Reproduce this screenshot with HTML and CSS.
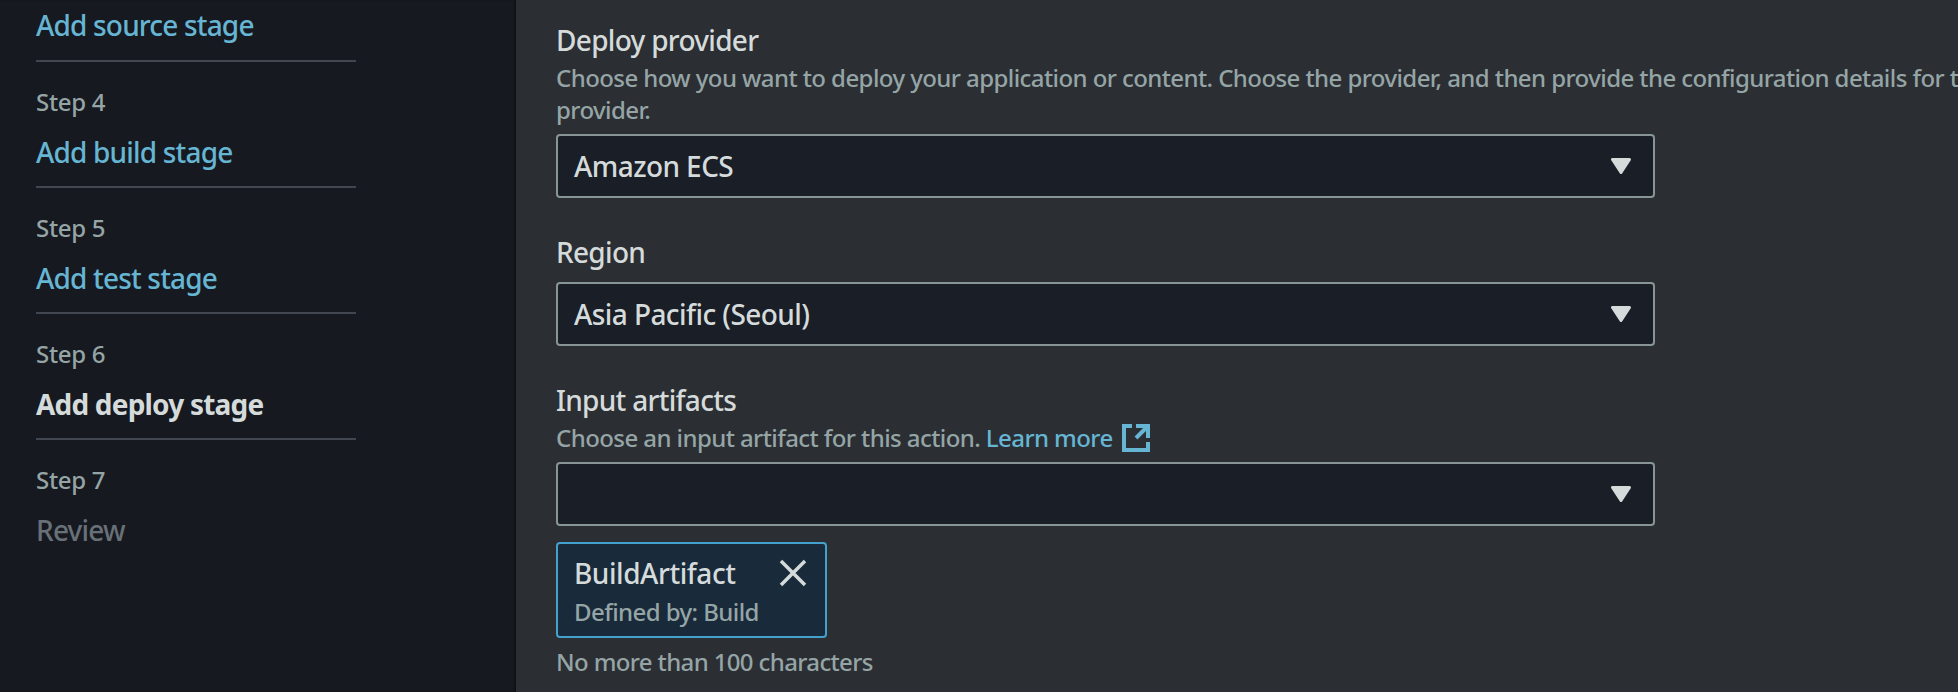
FILE: index.html
```html
<!DOCTYPE html>
<html lang="en">
<head>
<meta charset="utf-8">
<title>Add deploy stage</title>
<link rel="stylesheet" href="styles.css">
</head>
<body>
<div class="page">
  <nav class="steps">
    <div class="step"><span class="step-name link">Add source stage</span></div>
    <div class="step"><span class="step-no">Step 4</span><span class="step-name link">Add build stage</span></div>
    <div class="step"><span class="step-no">Step 5</span><span class="step-name link">Add test stage</span></div>
    <div class="step"><span class="step-no">Step 6</span><span class="step-name current">Add deploy stage</span></div>
    <div class="step last"><span class="step-no">Step 7</span><span class="step-name disabled">Review</span></div>
  </nav>
  <main class="form">
    <section class="field">
      <h3 class="label">Deploy provider</h3>
      <p class="hint">Choose how you want to deploy your application or content. Choose the provider, and then provide the configuration details for that<br>provider.</p>
      <div class="select"><span>Amazon ECS</span><svg class="caret" viewBox="0 0 20 16"><path d="M1.5 1.5h17L10 14.5z"/></svg></div>
    </section>
    <section class="field">
      <h3 class="label">Region</h3>
      <div class="select"><span>Asia Pacific (Seoul)</span><svg class="caret" viewBox="0 0 20 16"><path d="M1.5 1.5h17L10 14.5z"/></svg></div>
    </section>
    <section class="field">
      <h3 class="label">Input artifacts</h3>
      <p class="hint">Choose an input artifact for this action. <a class="link">Learn more</a><svg class="external" viewBox="0 0 28 28"><path d="M10 2H2v24h24v-8M14 2h12v12M25 3L14 14"/></svg></p>
      <div class="select"><span></span><svg class="caret" viewBox="0 0 20 16"><path d="M1.5 1.5h17L10 14.5z"/></svg></div>
      <div class="token">
        <div class="token-text"><span class="token-name">BuildArtifact</span><span class="token-by">Defined by: Build</span></div>
        <svg class="close" viewBox="0 0 28 28"><path d="M2 2l24 24M26 2L2 26"/></svg>
      </div>
      <p class="hint note">No more than 100 characters</p>
    </section>
  </main>
</div>
</body>
</html>
```
FILE: styles.css
```css
* { box-sizing: border-box; margin: 0; padding: 0; }
body {
  background: #2b2e33;
  color: #d5dbdb;
  font-family: "Noto Sans", "Open Sans", sans-serif;
  font-size: 28px;
  font-weight: 500;
  overflow: hidden;
}
.page { display: flex; height: 692px; overflow: hidden; }
.steps {
  flex: none;
  width: 516px;
  padding: 4px 0 0 36px;
  background: #16191f;
  box-shadow: inset -2px 0 2px -1px #0c0e11;
}
.step { display: flex; flex-direction: column; width: 320px; height: 126px; border-bottom: 2px solid #414750; }
.step:first-child { height: 58px; }
.step:first-child .step-name { margin-top: -1px; }
.step.last { border: 0; }
.step-no { padding-top: 22px; height: 68px; font-size: 24px; line-height: 36px; color: #95a5a6; letter-spacing: -0.3px; }
.step-name { line-height: 44px; white-space: nowrap; letter-spacing: -0.82px; }
.link { color: #66b5d3; }
.current { color: #d5dbdb; font-weight: 700; letter-spacing: -0.8px; }
.disabled { color: #687078; }
.form { flex: none; padding: 18px 0 0 40px; width: 1800px; }
.field { margin-bottom: 32px; }
.label { font-weight: 500; font-size: 28px; line-height: 44px; letter-spacing: -0.7px; }
.hint { font-size: 24px; line-height: 32px; color: #95a5a6; white-space: nowrap; letter-spacing: -0.58px; }
.select {
  display: flex; align-items: center; justify-content: space-between;
  width: 1099px; height: 64px; margin-top: 8px; padding: 0 22px 0 16px;
  border: 2px solid #879596; border-radius: 4px;
  background: #1a1e26; letter-spacing: -0.58px;
}
.select span { padding-bottom: 1px; }
.caret { width: 20px; height: 16px; fill: #d5dbdb; stroke: #d5dbdb; stroke-width: 3; stroke-linejoin: round; }
.external { width: 28px; height: 28px; margin-left: 9px; vertical-align: -5px; fill: none; stroke: #66b5d3; stroke-width: 4; }
.token {
  display: flex; justify-content: space-between; width: 271px; height: 96px; margin-top: 16px; padding: 7px 18px 0 16px;
  border: 2px solid #44a0cc; border-radius: 4px; background: #192a3a;
}
.token-text { display: flex; flex-direction: column; }
.token-name { line-height: 44px; letter-spacing: -0.45px; }
.token-by { font-size: 24px; line-height: 34px; color: #95a5a6; letter-spacing: -0.58px; white-space: nowrap; }
.close { flex: none; width: 28px; height: 28px; margin-top: 8px; stroke: #d5dbdb; stroke-width: 3.5; }
.note { margin-top: 8px; letter-spacing: -0.63px; }
```
